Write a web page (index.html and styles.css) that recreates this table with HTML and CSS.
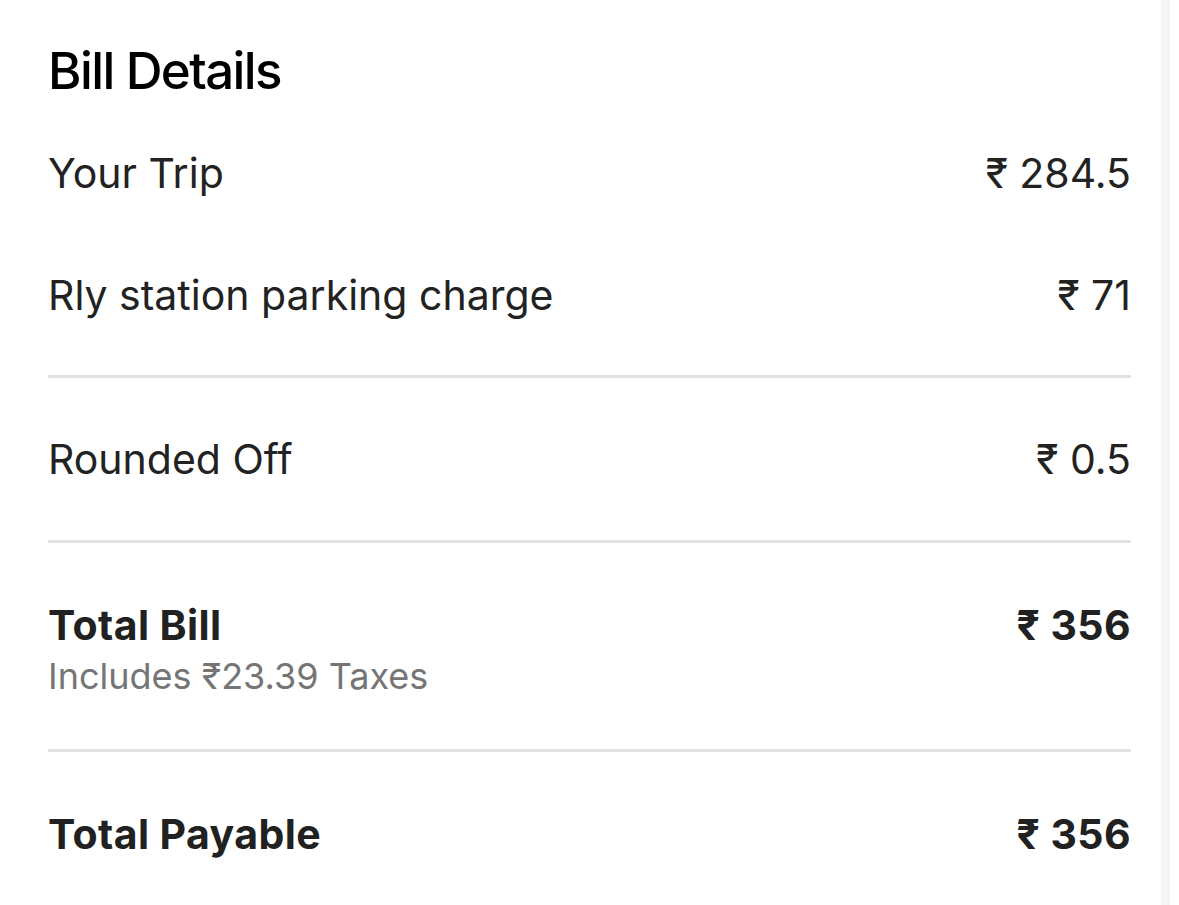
FILE: index.html
```html
<!DOCTYPE html>
<html lang="en">
<head>
    <meta charset="UTF-8">
    <meta name="viewport" content="width=device-width, initial-scale=1.0">
    <title>Bill Details</title>
    <link rel="stylesheet" href="styles.css">
</head>
<body>
    <div class="page">
        <div class="bill">
            <h1 class="bill-title">Bill Details</h1>

            <div class="group group-trip">
                <div class="row">
                    <span class="label">Your Trip</span>
                    <span class="amount">₹ 284.5</span>
                </div>
                <div class="row row-next">
                    <span class="label">Rly station parking charge</span>
                    <span class="amount">₹ 71</span>
                </div>
            </div>

            <div class="group group-round">
                <div class="row">
                    <span class="label">Rounded Off</span>
                    <span class="amount">₹ 0.5</span>
                </div>
            </div>

            <div class="group group-total">
                <div class="row row-bold">
                    <span class="label">Total Bill</span>
                    <span class="amount">₹ 356</span>
                </div>
                <p class="note">Includes ₹23.39 Taxes</p>
            </div>

            <div class="group group-payable">
                <div class="row row-bold">
                    <span class="label">Total Payable</span>
                    <span class="amount">₹ 356</span>
                </div>
            </div>
        </div>

        <!-- scroll track on the right -->
        <div class="track"></div>
    </div>
</body>
</html>
```

FILE: styles.css
```css
html, body {
    height: 100%;
}

body {
    margin: 0;
    background: #fff;
    font-family: 'Inter', 'Noto Sans', sans-serif;
    color: #222;
    overflow: hidden;
}

.page {
    display: flex;
    height: 100%;
}

.bill {
    width: 1083px;
    margin-left: 48px;
}

.bill-title {
    margin: 0;
    padding-top: 41px;
    font-size: 51px;
    line-height: 60px;
    font-weight: 500;
    letter-spacing: -1.6px;
    color: #000;
}

.group {
    border-bottom: 3px solid #e2e2e2;
}

.group-trip {
    padding: 47px 0 55px;
}

.group-round {
    padding: 56px 0;
}

.group-total {
    padding: 57px 0 51px;
}

.group-payable {
    padding-top: 57px;
    border-bottom: none;
}

.row {
    display: flex;
    justify-content: space-between;
    font-size: 41px;
    line-height: 50px;
}

.row-next {
    margin-top: 72px;
}

.row-bold {
    font-weight: 700;
    letter-spacing: 0.4px;
    color: #212121;
}

.note {
    margin: 4px 0 0;
    font-size: 36px;
    line-height: 44px;
    color: #757575;
}

.track {
    width: 9px;
    margin-left: 30px;
    background: #f5f5f6;
}
```
